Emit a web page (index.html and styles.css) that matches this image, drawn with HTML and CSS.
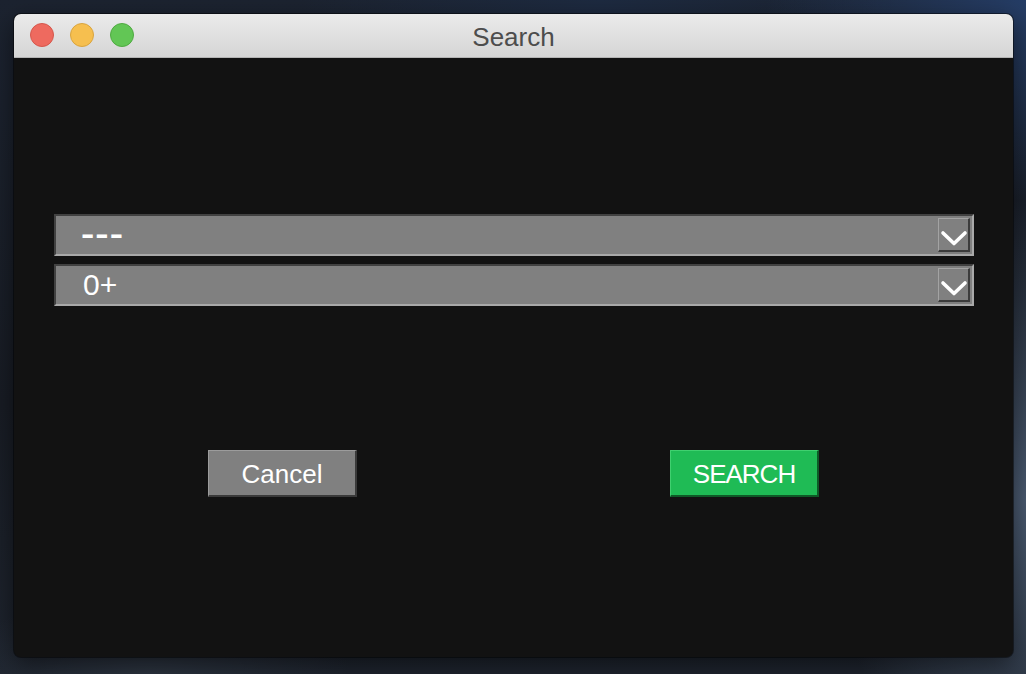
FILE: index.html
```html
<!DOCTYPE html>
<html>
<head>
<meta charset="utf-8">
<title>Search</title>
<link rel="stylesheet" href="styles.css">
</head>
<body>
<div class="desktop">
  <div class="window">
    <div class="titlebar">
      <div class="lights">
        <span class="light red"></span>
        <span class="light yellow"></span>
        <span class="light green"></span>
      </div>
      <div class="title">Search</div>
      <div class="spacer"></div>
    </div>
    <div class="content">
      <div class="combo">
        <span class="combo-value dashes">---</span>
        <span class="combo-arrow">
          <svg width="29" height="31" viewBox="0 0 29 31"><polyline points="4,14 15,24.5 26,14" fill="none" stroke="#ffffff" stroke-width="3.6" stroke-linecap="round" stroke-linejoin="round"/></svg>
        </span>
      </div>
      <div class="combo">
        <span class="combo-value">0+</span>
        <span class="combo-arrow">
          <svg width="29" height="31" viewBox="0 0 29 31"><polyline points="4,14 15,24.5 26,14" fill="none" stroke="#ffffff" stroke-width="3.6" stroke-linecap="round" stroke-linejoin="round"/></svg>
        </span>
      </div>
      <div class="actions">
        <button class="btn btn-cancel">Cancel</button>
        <button class="btn btn-search">SEARCH</button>
      </div>
    </div>
  </div>
</div>
</body>
</html>
```

FILE: styles.css
```css
* { box-sizing: border-box; }
html, body { margin: 0; padding: 0; }
body {
  width: 1026px;
  height: 674px;
  overflow: hidden;
  font-family: "Liberation Sans", Arial, sans-serif;
}
.desktop {
  width: 1026px;
  height: 674px;
  padding: 14px 13px 17px 14px;
  background:
    radial-gradient(ellipse 260px 200px at 1026px 0px, #253d66 0%, rgba(37,61,102,0) 100%),
    radial-gradient(ellipse 200px 300px at 1026px 500px, #4a5a70 0%, rgba(74,90,112,0) 100%),
    radial-gradient(ellipse 300px 120px at 600px 0px, #1d2a40 0%, rgba(29,42,64,0) 100%),
    radial-gradient(ellipse 200px 80px at 150px 674px, #2c3440 0%, rgba(44,52,64,0) 100%),
    linear-gradient(180deg, #1c2330 0%, #181c24 60%, #1e242e 100%);
}
.window {
  width: 999px;
  height: 643px;
  border-radius: 7px;
  overflow: hidden;
  background: #121212;
  display: flex;
  flex-direction: column;
  box-shadow: 0 0 0 1px rgba(0,0,0,0.45), 0 8px 24px rgba(0,0,0,0.5);
}
.titlebar {
  height: 44px;
  flex: none;
  display: grid;
  grid-template-columns: 1fr auto 1fr;
  align-items: center;
  background: linear-gradient(180deg, #ebebeb 0%, #d5d5d5 100%);
  border-bottom: 1px solid #b4b4b4;
  padding-bottom: 1px;
}
.lights {
  display: flex;
  gap: 16px;
  padding-left: 16px;
}
.light {
  width: 24px;
  height: 24px;
  border-radius: 50%;
}
.red { background: #ee6a5f; border: 1px solid #d5574c; }
.yellow { background: #f6bf4f; border: 1px solid #d9a43f; }
.green { background: #62c655; border: 1px solid #4faa41; }
.title {
  font-size: 26px;
  color: #4d4d4d;
  line-height: 30px;
  padding-top: 3px;
}
.content {
  flex: 1;
  padding: 156px 39px 0 40px;
  display: flex;
  flex-direction: column;
  gap: 8px;
}
.combo {
  height: 42px;
  background: #808080;
  border-top: 2px solid #414141;
  border-left: 2px solid #414141;
  border-bottom: 2px solid #a9a9a9;
  border-right: 2px solid #a9a9a9;
  display: flex;
  align-items: center;
  justify-content: space-between;
  padding: 0 2px 0 27px;
}
.combo-value {
  color: #ffffff;
  font-size: 30px;
  line-height: 34px;
}
.dashes {
  display: inline-block;
  font-weight: bold;
  letter-spacing: 0.8px;
  transform: scaleX(1.33);
  transform-origin: left center;
  margin-left: -2px;
  margin-top: -2px;
}
.combo-arrow {
  width: 32px;
  height: 34px;
  background: #808080;
  border-top: 1px solid #a3a3a3;
  border-left: 1px solid #a3a3a3;
  border-bottom: 2px solid #3c3c3c;
  border-right: 2px solid #3c3c3c;
  display: flex;
}
.combo-arrow svg { display: block; }
.actions {
  margin-top: 136px;
  display: grid;
  grid-template-columns: 149px 149px;
  column-gap: 313px;
  justify-content: center;
  padding-right: 1px;
}
.btn {
  width: 149px;
  height: 47px;
  font-family: "Liberation Sans", Arial, sans-serif;
  font-size: 26px;
  color: #ffffff;
  padding: 3px 0 0 0;
  cursor: pointer;
}
.btn-cancel {
  background: #808080;
  border-top: 1px solid #9c9c9c;
  border-left: 1px solid #9c9c9c;
  border-bottom: 2px solid #3a3a3a;
  border-right: 2px solid #3a3a3a;
}
.btn-search {
  background: #1fbb55;
  border-top: 1px solid #3fd06f;
  border-left: 1px solid #3fd06f;
  border-bottom: 2px solid #0e5a27;
  border-right: 2px solid #0e5a27;
  letter-spacing: -1px;
}
```
